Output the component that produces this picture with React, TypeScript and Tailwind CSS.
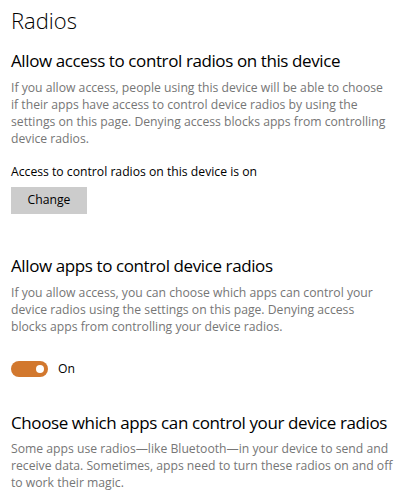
import { useState } from 'react';

function Toggle({ on, onChange }: { on: boolean; onChange: (v: boolean) => void }) {
  return (
    <button
      onClick={() => onChange(!on)}
      className={`flex h-[16px] w-[37px] items-center rounded-full px-[4px] ${
        on ? 'justify-end bg-[#d2782e]' : 'justify-start border-2 border-black bg-white'
      }`}
    >
      <span className={`h-[8px] w-[8px] rounded-full ${on ? 'bg-white' : 'bg-black'}`} />
    </button>
  );
}

function SectionTitle({ children, className = '' }: { children: React.ReactNode; className?: string }) {
  return (
    <h2 className={`whitespace-nowrap text-[17px] leading-[24px] tracking-[-0.4px] ${className}`}>
      {children}
    </h2>
  );
}

// grey description text, one line per entry so the wrap stays put
function Description({ lines, className = '' }: { lines: string[]; className?: string }) {
  return (
    <p className={`whitespace-nowrap text-[12.2px] leading-[17px] text-[#767676] ${className}`}>
      {lines.map((l) => (
        <span key={l} className="block">
          {l}
        </span>
      ))}
    </p>
  );
}

export default function App() {
  const [appsOn, setAppsOn] = useState(true);

  return (
    <div className="min-h-[500px] overflow-hidden bg-white px-[11px] pt-[5px] font-['Open_Sans',sans-serif] text-black">
      <h1 className="text-[22px] font-light leading-[30px]">Radios</h1>

      <SectionTitle className="mt-[14px]">Allow access to control radios on this device</SectionTitle>
      <Description
        className="mt-[6px]"
        lines={[
          'If you allow access, people using this device will be able to choose',
          'if their apps have access to control device radios by using the',
          'settings on this page. Denying access blocks apps from controlling',
          'device radios.',
        ]}
      />
      <p className="mt-[16px] text-[12.2px] leading-[17px]">
        Access to control radios on this device is on
      </p>
      <button className="mt-[7px] h-[27px] w-[76px] bg-[#cccccc] text-[12.2px]">
        Change
      </button>

      <SectionTitle className="mt-[40px]">Allow apps to control device radios</SectionTitle>
      <Description
        className="mt-[6px]"
        lines={[
          'If you allow access, you can choose which apps can control your',
          'device radios using the settings on this page. Denying access',
          'blocks apps from controlling your device radios.',
        ]}
      />
      <div className="mt-[25px] flex items-center gap-[10px]">
        <Toggle on={appsOn} onChange={setAppsOn} />
        <span className="text-[12.2px] leading-[17px]">{appsOn ? 'On' : 'Off'}</span>
      </div>

      <SectionTitle className="mt-[34px]">Choose which apps can control your device radios</SectionTitle>
      <Description
        className="mt-[5px]"
        lines={[
          'Some apps use radios—like Bluetooth—in your device to send and',
          'receive data. Sometimes, apps need to turn these radios on and off',
          'to work their magic.',
        ]}
      />
    </div>
  );
}
